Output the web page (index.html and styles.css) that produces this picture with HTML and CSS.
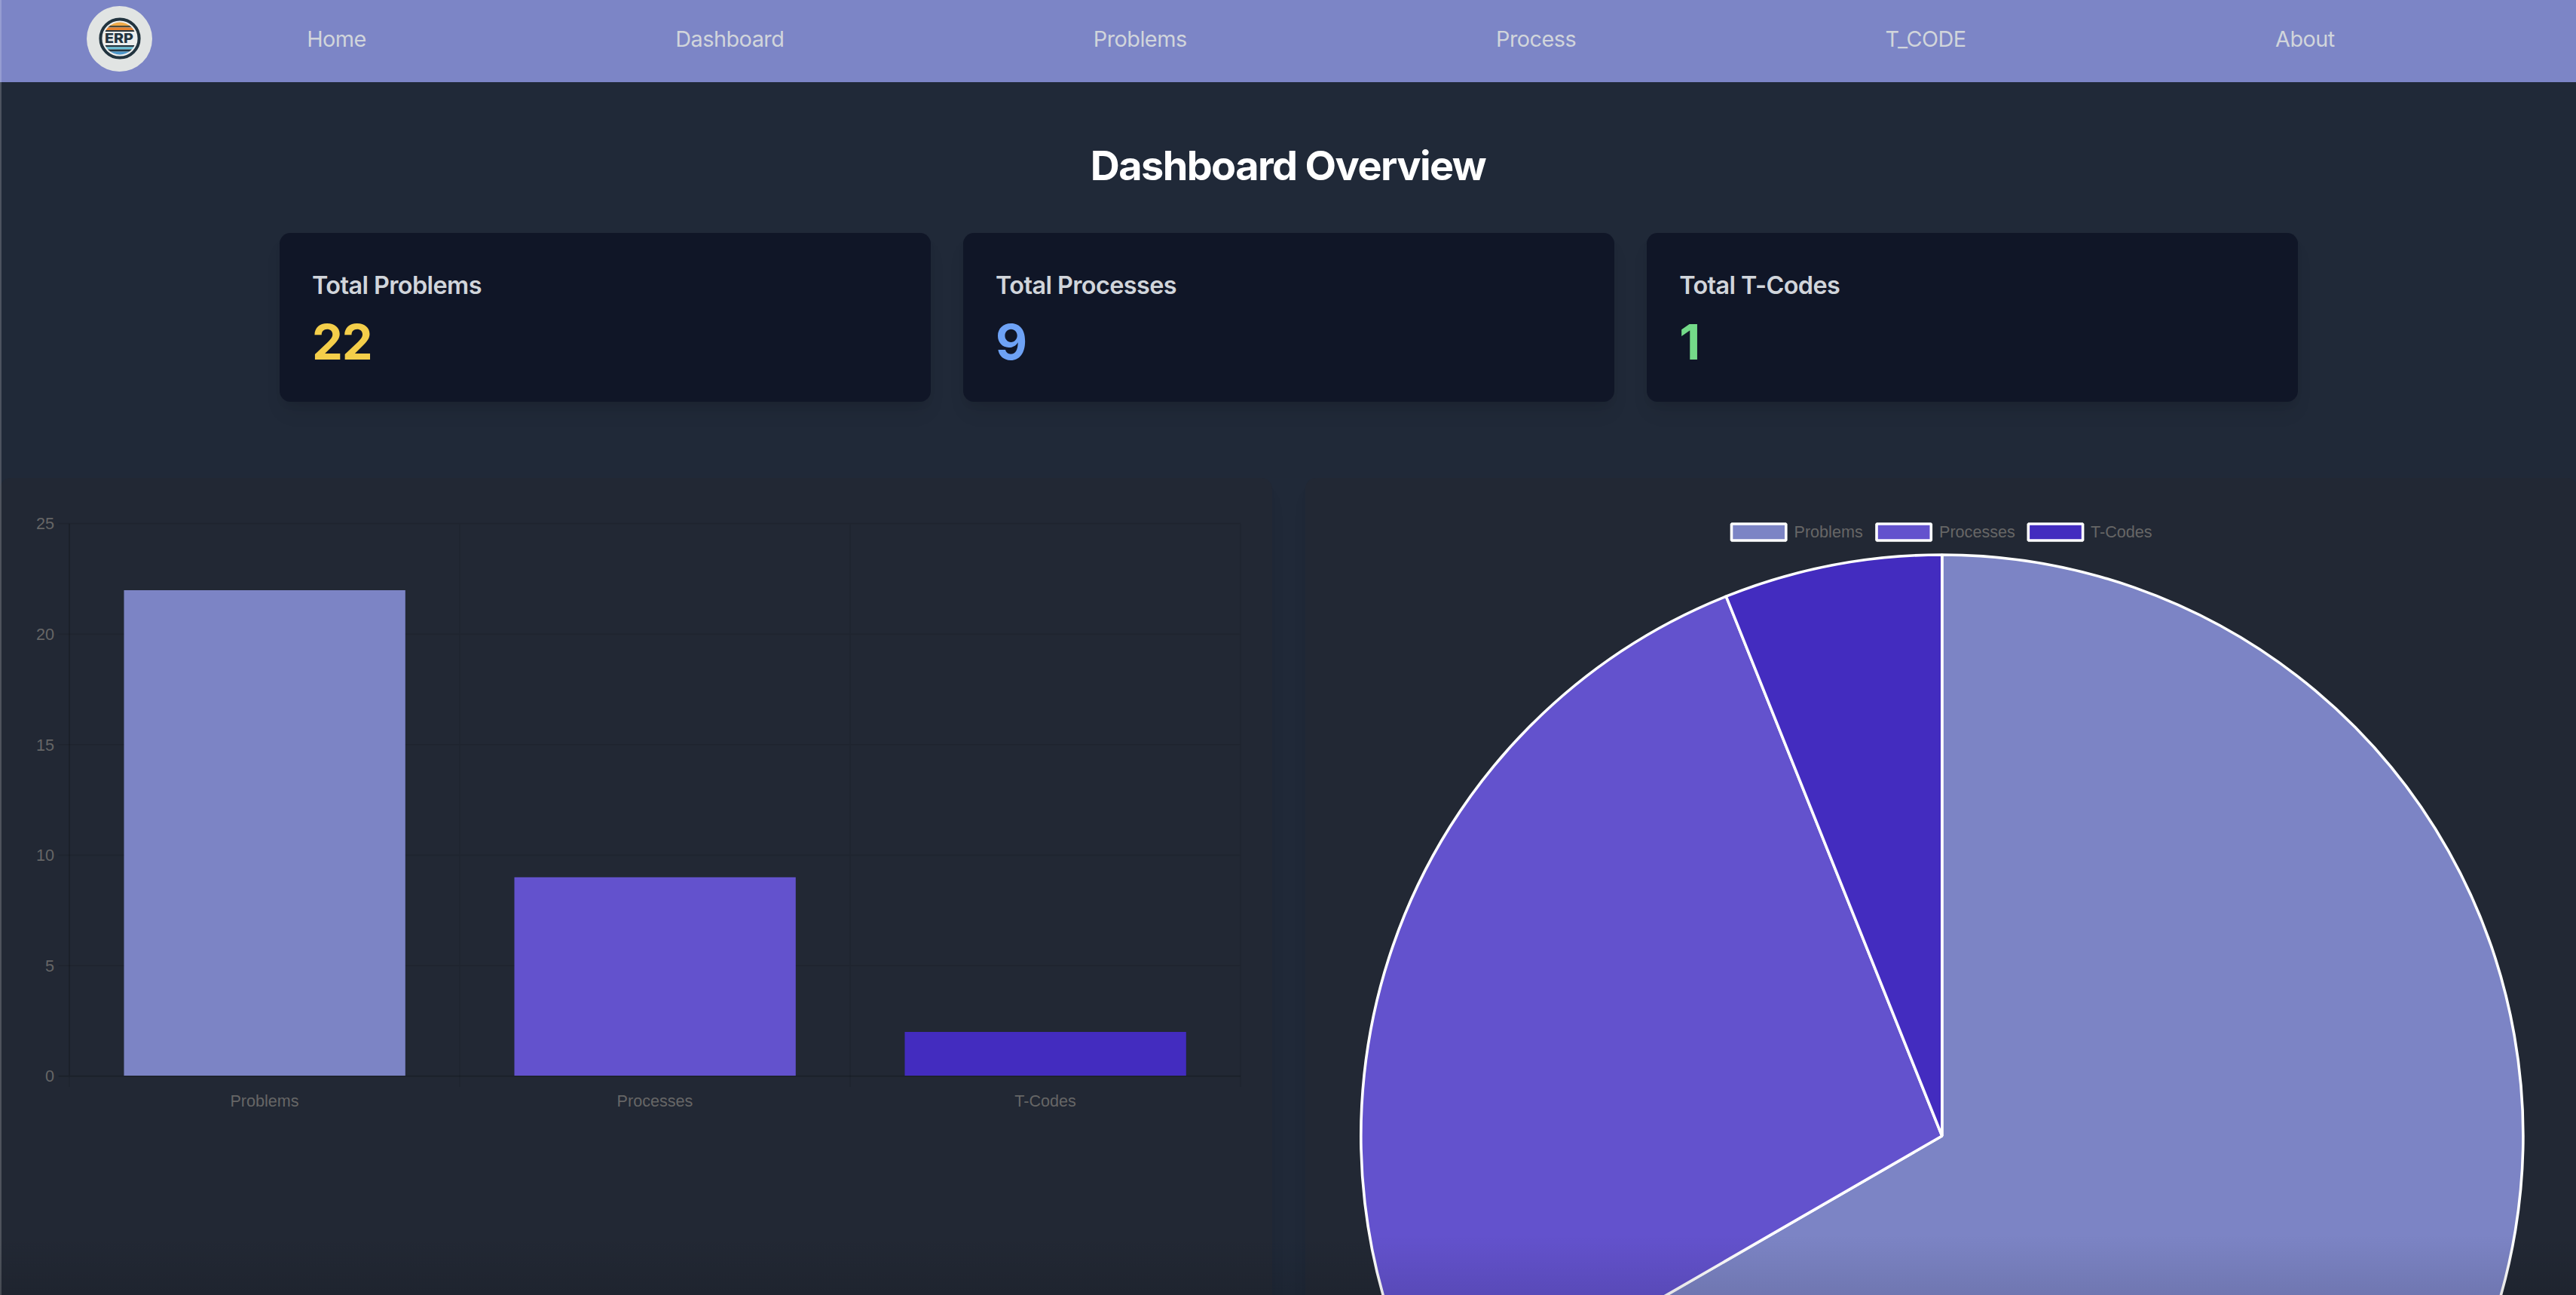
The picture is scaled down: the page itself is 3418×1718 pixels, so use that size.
FILE: index.html
```html
<!DOCTYPE html>
<html lang="en">
<head>
<meta charset="utf-8">
<title>Dashboard Overview</title>
<link rel="stylesheet" href="styles.css">
</head>
<body>
<nav class="navbar">
  <svg class="logo" viewBox="0 0 87 87" aria-label="ERP">
    <defs><clipPath id="disc"><circle cx="44" cy="43" r="21.500"/></clipPath></defs>
    <circle cx="43.500" cy="43.500" r="43.500" fill="#e1e4e3"/>
    <circle cx="44" cy="43" r="25.600" fill="#eceeed" stroke="#22343f" stroke-width="4"/>
    <g clip-path="url(#disc)">
      <rect x="20" y="21" width="48" height="5.500" fill="#efaa48"/>
      <rect x="20" y="26" width="48" height="2.500" fill="#4a4a3c"/>
      <rect x="20" y="28.500" width="48" height="3.700" fill="#e5812f"/>
      <rect x="20" y="32" width="48" height="2" fill="#263640"/>
      <rect x="20" y="52" width="48" height="2.500" fill="#22343f"/>
      <rect x="20" y="54.500" width="48" height="3" fill="#69c1d8"/>
      <rect x="20" y="57.500" width="48" height="3" fill="#22343f"/>
      <rect x="20" y="60.500" width="48" height="6" fill="#4b96ca"/>
    </g>
    <text class="logo-text" x="43" y="49.300" textLength="38" lengthAdjust="spacingAndGlyphs">ERP</text>
  </svg>
  <ul class="links">
    <li>Home</li><li>Dashboard</li><li>Problems</li><li>Process</li><li>T_CODE</li><li>About</li>
  </ul>
</nav>
<main>
  <h1 class="title">Dashboard Overview</h1>
  <section class="stats">
    <article class="stat"><h2>Total Problems</h2><p class="yellow">22</p></article>
    <article class="stat"><h2>Total Processes</h2><p class="blue">9</p></article>
    <article class="stat"><h2>Total T-Codes</h2><p class="green">1</p></article>
  </section>
  <section class="charts">
    <div class="panel">
      <svg class="chart" viewBox="0 634 1688 1084">
        <g class="grid">
          <path d="M77.500 694.700H1646M77.500 841.300H1646M77.500 987.900H1646M77.500 1134.500H1646M77.500 1281.100H1646M610 694.700V1442M1128 694.700V1442M1646 694.700V1442M92 1428V1442"/>
          <path class="axis" d="M92 694.700V1427.700M77.500 1427.700H1646"/>
        </g>
        <rect x="164.500" y="783" width="373.300" height="644" fill="#7c84c5"/>
        <rect x="682.500" y="1163.800" width="373.300" height="263.200" fill="#6352cd"/>
        <rect x="1200.500" y="1369" width="373.300" height="58" fill="#432cbf"/>
        <g class="label end">
          <text x="72" y="702">25</text><text x="72" y="849">20</text><text x="72" y="995.500">15</text><text x="72" y="1142">10</text><text x="72" y="1288.500">5</text><text x="72" y="1435">0</text>
        </g>
        <g class="label middle">
          <text x="351" y="1468">Problems</text><text x="869" y="1468">Processes</text><text x="1387" y="1468">T-Codes</text>
        </g>
      </svg>
    </div>
    <div class="panel">
      <svg class="chart" viewBox="1732 634 1688 1084">
        <g class="slice">
          <path d="M2576.800 1507V736A771 771 0 1 1 1909.100 1892.500Z" fill="#7c84c5"/>
          <path d="M2576.800 1507L1909.100 1892.500A771 771 0 0 1 2290.300 791.200Z" fill="#6352cd"/>
          <path d="M2576.800 1507L2290.300 791.200A771 771 0 0 1 2576.800 736Z" fill="#432cbf"/>
          <rect x="2297.500" y="695" width="72.300" height="22" fill="#7c84c5"/>
          <rect x="2490" y="695" width="72.300" height="22" fill="#6352cd"/>
          <rect x="2691.300" y="695" width="72.300" height="22" fill="#432cbf"/>
        </g>
        <g class="label">
          <text x="2380.500" y="713">Problems</text><text x="2573" y="713">Processes</text><text x="2774" y="713">T-Codes</text>
        </g>
      </svg>
    </div>
  </section>
</main>
<div class="window-edge"></div>
<div class="fade"></div>
</body>
</html>
```
FILE: styles.css
```css
* { box-sizing: border-box; margin: 0; padding: 0; }
body {
  width: 3418px;
  height: 1718px;
  overflow: hidden;
  background: #202938;
  font-family: Inter, "Liberation Sans", sans-serif;
}
.navbar {
  display: flex;
  align-items: center;
  height: 109px;
  padding: 0 115px 6px;
  background: #7c85c6;
}
.logo { width: 87px; height: 87px; flex: none; }
.logo-text { font: 800 18px Inter, sans-serif; fill: #22343f; text-anchor: middle; }
.links {
  flex: 1;
  display: flex;
  justify-content: space-around;
  list-style: none;
  font-size: 28.800px;
  line-height: 43px;
  letter-spacing: -.500px;
  color: #d1d5db;
}
.title {
  padding-top: 79px;
  font-size: 54px;
  line-height: 64.800px;
  font-weight: 700;
  letter-spacing: -1.600px;
  text-align: center;
  color: #fff;
}
.stats {
  display: grid;
  grid-template-columns: repeat(3, 1fr);
  gap: 43.200px;
  margin: 56px 369px 0 371px;
}
.stat {
  height: 224px;
  padding: 45px 43px 41px;
  border-radius: 14.400px;
  background: #101627;
  box-shadow: 0 18px 27px -5px rgba(0,0,0,.08), 0 7px 11px -4px rgba(0,0,0,.08);
}
.stat h2 {
  font-size: 32.400px;
  line-height: 50.400px;
  font-weight: 600;
  letter-spacing: -.580px;
  color: #d1d5db;
}
.stat p {
  margin-top: 14px;
  font-size: 64.800px;
  line-height: 72px;
  font-weight: 700;
  letter-spacing: -1px;
}
.yellow { color: #f4ce4a; }
.blue { color: #6ea2f5; }
.green { color: #74da89; }
.charts {
  display: grid;
  grid-template-columns: 1688px 1688px;
  gap: 44px;
  margin-top: 101px;
}
.panel {
  height: 1100px;
  border-radius: 14.400px;
  background: #222834;
  box-shadow: 0 18px 27px -5px rgba(0,0,0,.05), 0 7px 11px -4px rgba(0,0,0,.05);
}
.chart { display: block; width: 1688px; height: 1084px; }
.grid path { fill: none; stroke: rgba(0,0,0,.08); stroke-width: 1.800px; }
.grid .axis { stroke: rgba(0,0,0,.2); }
.label { font: 21.600px "Liberation Sans", Arial, sans-serif; fill: #666; }
.end { text-anchor: end; }
.middle { text-anchor: middle; }
.slice { stroke: #fff; stroke-width: 3.600px; stroke-linejoin: bevel; }
.window-edge { position: absolute; inset: 0 auto 0 0; width: 2px; background: rgba(255,255,255,.2); }
.fade {
  position: absolute;
  inset: auto 0 0 0;
  height: 80px;
  background: linear-gradient(rgba(0,0,0,0), rgba(0,0,0,.1));
}
```
